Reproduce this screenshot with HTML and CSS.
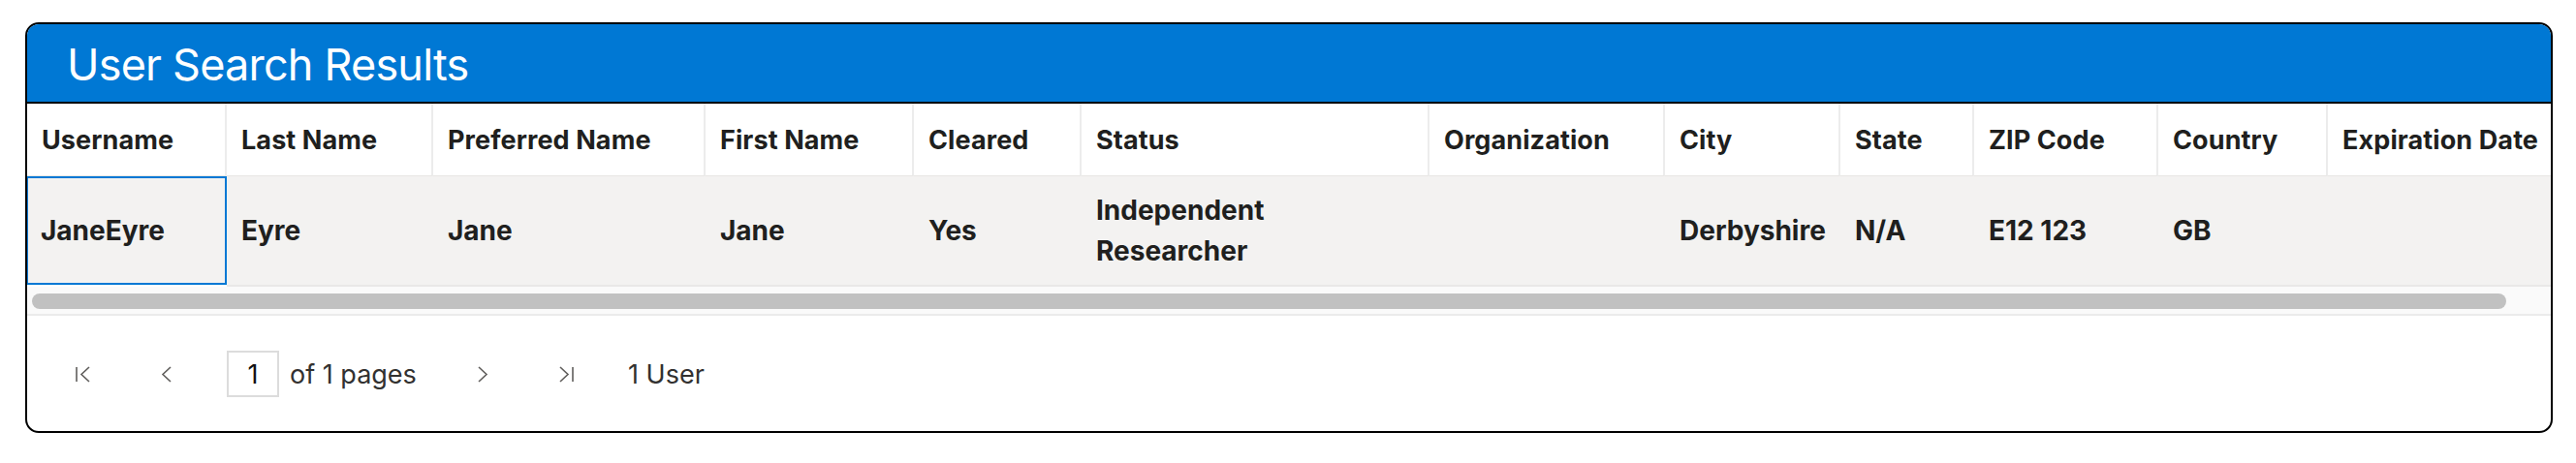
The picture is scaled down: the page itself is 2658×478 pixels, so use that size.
FILE: index.html
```html
<!DOCTYPE html>
<html lang="en">
<head>
<meta charset="utf-8">
<title>User Search Results</title>
<link rel="stylesheet" href="styles.css">
</head>
<body>
<div class="page">
  <section class="card">
    <header class="title-bar">
      <h1 class="title">User Search Results</h1>
    </header>
    <div class="grid-wrap">
      <div class="grid">
        <div class="hcell">Username</div>
        <div class="hcell">Last Name</div>
        <div class="hcell">Preferred Name</div>
        <div class="hcell">First Name</div>
        <div class="hcell">Cleared</div>
        <div class="hcell">Status</div>
        <div class="hcell">Organization</div>
        <div class="hcell">City</div>
        <div class="hcell">State</div>
        <div class="hcell">ZIP Code</div>
        <div class="hcell">Country</div>
        <div class="hcell">Expiration Date</div>

        <div class="dcell focused">JaneEyre</div>
        <div class="dcell">Eyre</div>
        <div class="dcell">Jane</div>
        <div class="dcell">Jane</div>
        <div class="dcell">Yes</div>
        <div class="dcell"><span class="wrap">Independent Researcher</span></div>
        <div class="dcell"></div>
        <div class="dcell">Derbyshire</div>
        <div class="dcell">N/A</div>
        <div class="dcell">E12 123</div>
        <div class="dcell">GB</div>
        <div class="dcell"></div>
      </div>
      <div class="scrollbar"><div class="thumb"></div></div>
    </div>
    <footer class="pager">
      <span class="pbtn first" aria-label="First page">
        <svg width="16" height="17" viewBox="0 0 16 17"><path d="M1 1v15M14 1L6 8.5 14 16" fill="none" stroke="#605e5c" stroke-width="1.6"/></svg>
      </span>
      <span class="pbtn prev" aria-label="Previous page">
        <svg width="11" height="17" viewBox="0 0 11 17"><path d="M10 1L2 8.5 10 16" fill="none" stroke="#605e5c" stroke-width="1.6"/></svg>
      </span>
      <span class="page-box">1</span>
      <span class="of">of 1 pages</span>
      <span class="pbtn next" aria-label="Next page">
        <svg width="11" height="17" viewBox="0 0 11 17"><path d="M1 1l8 7.5L1 16" fill="none" stroke="#605e5c" stroke-width="1.6"/></svg>
      </span>
      <span class="pbtn last" aria-label="Last page">
        <svg width="16" height="17" viewBox="0 0 16 17"><path d="M1 1l8 7.5L1 16M14 1v15" fill="none" stroke="#605e5c" stroke-width="1.6"/></svg>
      </span>
      <span class="count">1 User</span>
    </footer>
  </section>
</div>
</body>
</html>
```

FILE: styles.css
```css
* { box-sizing: border-box; }

html, body {
  margin: 0;
  padding: 0;
  background: #ffffff;
  font-family: "Inter", "Noto Sans", "Liberation Sans", sans-serif;
}

.page {
  padding: 23px 0 0 26px;
}

.card {
  width: 2608px;
  height: 424px;
  border: 2px solid #000;
  border-radius: 14px;
  overflow: hidden;
  display: flex;
  flex-direction: column;
  background: #fff;
}

.title-bar {
  height: 82px;
  flex: none;
  background: #0078d4;
  border-bottom: 2px solid #000;
  display: flex;
  align-items: center;
  padding-left: 41px;
}

.title {
  margin: 0;
  color: #fff;
  font-weight: 400;
  font-size: 45px;
  letter-spacing: -0.8px;
  line-height: 1;
  padding-top: 2px;
}

.grid-wrap {
  flex: none;
  overflow: hidden;
  border-bottom: 2px solid #ebebeb;
}

.grid {
  display: grid;
  grid-template-columns: 206px 213px 281px 215px 173px 359px 243px 181px 138px 190px 175px 260px;
  width: 2634px;
  color: #201f1e;
}

.hcell {
  height: 75px;
  display: flex;
  align-items: center;
  padding-left: 15px;
  border-right: 2px solid #ececec;
  border-bottom: 1px solid #e8e6e4;
  background: #fff;
  white-space: nowrap;
  font-size: 27px;
  font-weight: 700;
  letter-spacing: 0.1px;
}

.dcell {
  height: 114px;
  display: flex;
  align-items: center;
  padding-left: 15px;
  background: #f3f2f1;
  border-bottom: 2px solid #e9e8e7;
  line-height: 42px;
  font-size: 28px;
  font-weight: 700;
  letter-spacing: 0;
  white-space: nowrap;
}

.dcell .wrap {
  white-space: normal;
  max-width: 230px;
}

.dcell.focused {
  border: 2px solid #0078d4;
  padding-left: 13px;
  height: 112px;
  margin-left: -1px;
}

.scrollbar {
  height: 28px;
  background: #fafafa;
  padding: 7px 46px 0 5px;
}

.thumb {
  height: 16px;
  border-radius: 8px;
  background: #c1c1c1;
}

.pager {
  flex: 1;
  display: flex;
  align-items: center;
  padding-left: 50px;
  padding-top: 1px;
  color: #323130;
  font-size: 27px;
  font-weight: 400;
}

.pbtn {
  display: flex;
  align-items: center;
}

.pbtn.first { margin-right: 72px; }
.pbtn.prev { margin-right: 57px; }

.page-box {
  width: 54px;
  height: 48px;
  border: 2px solid #dcdcdc;
  display: flex;
  align-items: center;
  justify-content: center;
  color: #111;
  margin-right: 11px;
}

.of {
  width: 194px;
}

.pbtn.next { margin-right: 73px; }
.pbtn.last { margin-right: 55px; }

.count {
  color: #323130;
}
```
